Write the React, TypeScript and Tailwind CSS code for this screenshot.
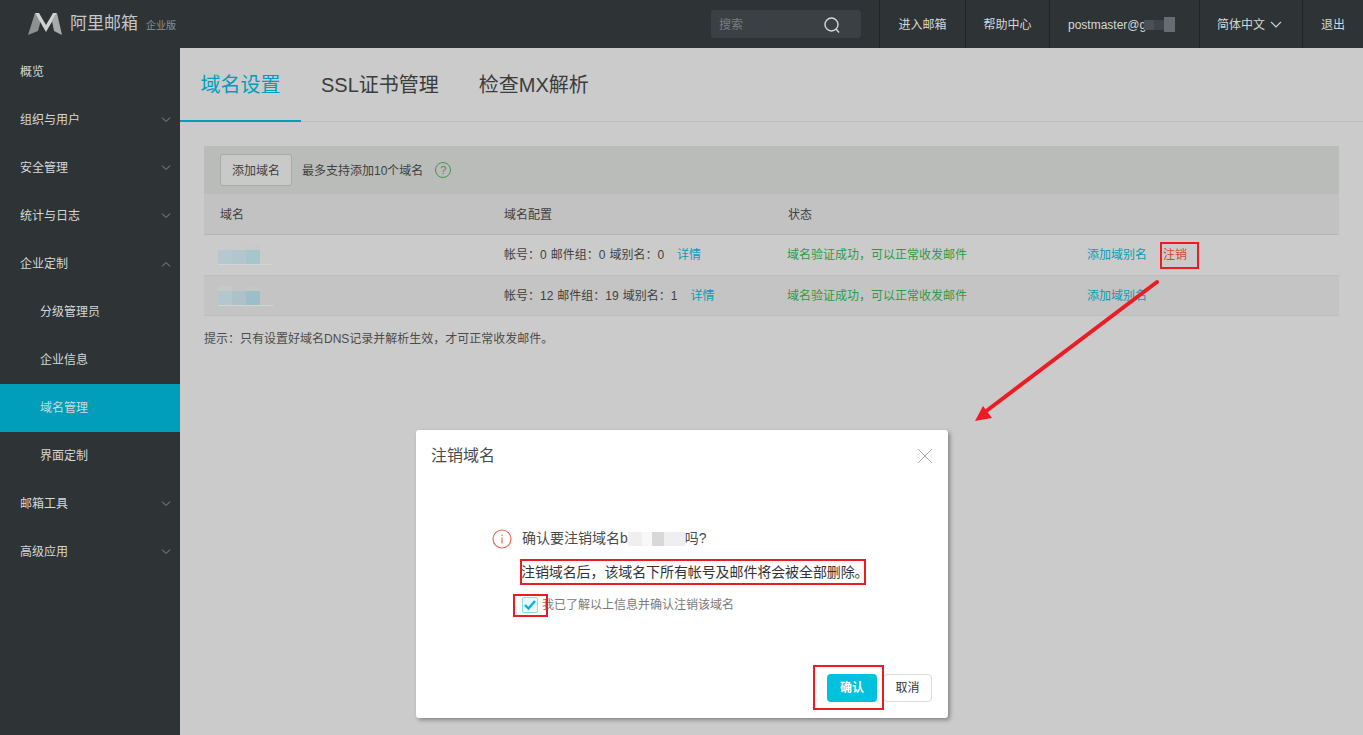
// Domain settings page with the "cancel domain" dialog and red annotations
import { FC } from "react";

const Chevron: FC<{ up?: boolean; className?: string }> = ({ up, className }) => (
  <svg width="10" height="6" viewBox="0 0 10 6" fill="none" className={className}>
    <path d={up ? "M1 5.5L5 1.5L9 5.5" : "M1 0.5L5 4.5L9 0.5"} stroke="currentColor" strokeWidth="1" />
  </svg>
);

const navItems = [
  { label: "概览" },
  { label: "组织与用户", arrow: "down" },
  { label: "安全管理", arrow: "down" },
  { label: "统计与日志", arrow: "down" },
  { label: "企业定制", arrow: "up" },
  { label: "分级管理员", sub: true },
  { label: "企业信息", sub: true },
  { label: "域名管理", sub: true, active: true },
  { label: "界面定制", sub: true },
  { label: "邮箱工具", arrow: "down" },
  { label: "高级应用", arrow: "down" },
];

const Sidebar: FC = () => (
  <aside className="w-[180px] shrink-0 bg-[#2e3336] text-[12px] text-[#d5d8d8]">
    {navItems.map((item) => (
      <div
        key={item.label}
        className={`flex h-12 items-center justify-between pr-[9px] ${item.sub ? "pl-10" : "pl-5"} ${
          item.active ? "bg-[#009ebb] text-[#cfd8da]" : ""
        }`}
      >
        <span>{item.label}</span>
        {item.arrow && <Chevron up={item.arrow === "up"} className="text-[#8b9195]" />}
      </div>
    ))}
  </aside>
);

const Header: FC = () => (
  <header className="flex h-12 shrink-0 items-center bg-[#2e3336] text-[12px] text-[#d5d8d8]">
    <div className="flex items-center pl-7">
      <svg width="35" height="22" viewBox="0 0 35 22">
        <path d="M7 0L0 22L10 18L13 7Z" fill="#8f9190" />
        <path d="M7 0H11L18 12L25 0H29L18 19Z" fill="#d0d2d1" />
        <path d="M29 0L34 22L26 18L24 8Z" fill="#a9abaa" />
      </svg>
      <span className="ml-[7px] text-[17px] text-[#c6c8c8]">阿里邮箱</span>
      <span className="ml-2 mt-0.5 text-[10px] text-[#8d9092]">企业版</span>
    </div>
    <div className="ml-auto mr-[18px] flex h-7 w-[150px] items-center justify-between rounded bg-[#3b4044] pl-2 pr-5 pt-px text-[#787d80]">
      <span>搜索</span>
      <svg width="18" height="18" viewBox="0 0 18 18" fill="none" stroke="#d5d8d8" strokeWidth="1.4">
        <circle cx="8.5" cy="8.5" r="6.5" />
        <path d="M13 13L16 16.5" />
      </svg>
    </div>
    {[
      { label: "进入邮箱", w: "w-[86px]" },
      { label: "帮助中心", w: "w-[84px]" },
    ].map((l) => (
      <div key={l.label} className={`flex h-full ${l.w} items-center justify-center border-l border-[#1f2326] pt-px`}>
        {l.label}
      </div>
    ))}
    <div className="flex h-full w-[150px] items-center border-l border-[#1f2326] pl-[18px] pt-px">
      <span>postmaster@g</span>
      <span className="ml-[-2px] h-[10px] w-[10px] bg-[#4b5054]" />
      <span className="h-[10px] w-[10px] bg-[#3f4448]" />
      <span className="h-[15px] w-[11px] bg-[#676b72]" />
    </div>
    <div className="flex h-full w-[103px] items-center gap-1.5 border-l border-[#1f2326] pl-[17px] pt-px">
      <span>简体中文</span>
      <Chevron className="scale-125 text-[#d5d8d8]" />
    </div>
    <div className="flex h-full w-[61px] items-center justify-center border-l border-[#1f2326] pt-px">退出</div>
  </header>
);

const Tabs: FC = () => (
  <div className="flex h-[74px] shrink-0 border-b border-[#bdbdbd] pt-px text-[20px] text-[#3c3c3c]">
    <div className="-mb-px flex w-[121px] items-center justify-center border-b-2 border-[#009ebb] text-[#009ebb]">
      域名设置
    </div>
    <div className="ml-5 flex items-center">SSL证书管理</div>
    <div className="ml-10 flex items-center">检查MX解析</div>
  </div>
);

const Blur: FC<{ cols: string[]; top: string[] }> = ({ cols, top }) => (
  <div className="ml-3.5 flex flex-col">
    <div className="flex">
      {top.map((c, i) => (
        <span key={i} className={`h-[5px] w-[14px] ${c}`} />
      ))}
    </div>
    <div className="flex">
      {cols.map((c, i) => (
        <span key={i} className={`h-[14px] w-[14px] ${c}`} />
      ))}
    </div>
    <div className="h-px w-[55px] bg-[#d4d6d6]" />
  </div>
);

const rows = [
  {
    cfg: ["帐号：0", "邮件组：0", "域别名：0"],
    h: "h-[41px]",
    bg: "bg-[#cbcbcb]",
    cancel: true,
    blur: ["bg-[#b6c8cf]", "bg-[#b3c6cb]", "bg-[#a5c6cd]"],
    top: ["bg-[#cbcbcb]", "bg-[#cbcbcb]", "bg-[#c6cacb]"],
  },
  {
    cfg: ["帐号：12", "邮件组：19", "域别名：1"],
    h: "h-10",
    bg: "bg-[#c4c4c4]",
    cancel: false,
    blur: ["bg-[#b3c7cd]", "bg-[#acc2c8]", "bg-[#9dbdc8]"],
    top: ["bg-[#c7c9c9]", "bg-[#c1c5c5]", "bg-[#c4c7c7]"],
  },
];

const DomainTable: FC = () => (
  <div className="mx-6 mt-6 text-[12px] text-[#3f3f3f]">
    <div className="flex h-12 items-center bg-[#babcba] pl-4">
      <div className="flex h-8 w-[72px] items-center justify-center rounded-[3px] border border-[#a9a9a9] bg-[#c9c9c9] pt-px">
        添加域名
      </div>
      <span className="ml-2.5 pt-px">最多支持添加10个域名</span>
      <span className="ml-3 flex h-4 w-4 items-center justify-center rounded-full border border-[#3f9a4e] text-[11px] leading-none text-[#4b8f55]">
        ?
      </span>
    </div>
    <div className="grid h-[41px] grid-cols-[300px_284px_300px_1fr] items-center border-b border-[#b6b6b6] bg-[#c2c2c2] pt-px">
      <span className="pl-4">域名</span>
      <span>域名配置</span>
      <span>状态</span>
    </div>
    {rows.map((r, i) => (
      <div
        key={i}
        className={`grid ${r.h} grid-cols-[300px_283px_300px_1fr] items-center border-b border-[#bdbdbd] ${r.bg}`}
      >
        <Blur cols={r.blur} top={r.top} />
        <div className="flex items-center">
          <span className="flex gap-1">
            {r.cfg.map((c) => (
              <span key={c}>{c}</span>
            ))}
          </span>
          <span className="ml-[13px] text-[#0a9bb5]">详情</span>
        </div>
        <span className="text-[#2f9a45]">域名验证成功，可以正常收发邮件</span>
        <div className="flex items-center">
          <span className="text-[#0a9bb5]">添加域别名</span>
          {r.cancel && <span className="ml-4 text-[#d8462c]">注销</span>}
        </div>
      </div>
    ))}
    <p className="mt-[14px] text-[#4c4c4c]">提示：只有设置好域名DNS记录并解析生效，才可正常收发邮件。</p>
  </div>
);

const Dialog: FC = () => (
  <div className="absolute left-[416px] top-[430px] flex h-[288px] w-[532px] flex-col rounded-[3px] bg-white text-[#4a4a4a] shadow-[2px_2px_4px_rgba(0,0,0,0.35)]">
    <div className="flex items-center justify-between pl-[15px] pr-[15px] pt-4">
      <span className="text-[16px] leading-5">注销域名</span>
      <svg width="16" height="16" viewBox="0 0 16 16" stroke="#a8a8a8" strokeWidth="1">
        <path d="M1 1L15 15M15 1L1 15" />
      </svg>
    </div>
    <div className="ml-[76px] mt-[62px] flex items-center">
      <svg width="20" height="20" viewBox="0 0 20 20" fill="none" stroke="#ef6a50" strokeWidth="1.2">
        <circle cx="10" cy="10" r="9" />
        <path d="M10 5.5V7M10 8.5V14.5" />
      </svg>
      <span className="ml-2.5 flex items-center text-[14px]">
        确认要注销域名b
        <span className="h-3.5 w-[14px] bg-[#efefef]" />
        <span className="h-3.5 w-[10px] bg-[#f8f8f8]" />
        <span className="h-3.5 w-[12px] bg-[#d8d8d8]" />
        <span className="h-3.5 w-[21px] bg-[#efefef]" />
        吗?
      </span>
    </div>
    <p className="ml-[105px] mt-[13px] whitespace-nowrap text-[14px] leading-5 tracking-[-0.1px] text-[#333]">
      注销域名后，该域名下所有帐号及邮件将会被全部删除。
    </p>
    <div className="ml-[106px] mt-[14px] flex items-center text-[12px] text-[#7a7a7a]">
      <span className="flex h-4 w-4 items-center justify-center rounded-[2px] border border-[#8fdcea] bg-[#e9f9fc]">
        <svg width="12" height="10" viewBox="0 0 12 10" fill="none" stroke="#00b5d8" strokeWidth="2.4">
          <path d="M1 5L4.5 8.5L11 1" />
        </svg>
      </span>
      <span className="ml-1">我已了解以上信息并确认注销该域名</span>
    </div>
    <div className="mb-4 mr-4 mt-auto flex justify-end gap-1.5 text-[12px]">
      <button className="h-7 w-[50px] rounded-[4px] bg-[#00c1de] font-bold text-white">确认</button>
      <button className="h-7 w-[49px] rounded-[4px] border border-[#dcdcdc] bg-white text-[#333]">取消</button>
    </div>
  </div>
);

// Red markup drawn on top of the screenshot
const Annotations: FC = () => (
  <>
    <div className="absolute left-[1160px] top-[242px] h-[27px] w-[39px] border-2 border-[#ed1c24]" />
    <div className="absolute left-[520px] top-[559px] h-[26px] w-[346px] border-2 border-[#ed1c24]" />
    <div className="absolute left-[513px] top-[594px] h-[23px] w-[35px] border-2 border-[#ed1c24]" />
    <div className="absolute left-[813px] top-[665px] h-[45px] w-[71px] border-2 border-[#ed1c24]" />
    <svg className="absolute left-[970px] top-[275px]" width="195" height="152" viewBox="970 275 195 152">
      <path d="M1157 282L985 412" stroke="#ed1c24" strokeWidth="4" strokeLinecap="round" />
      <path d="M975 421L983 406L992 418Z" fill="#ed1c24" />
    </svg>
  </>
);

export default function App() {
  return (
    <div className="relative flex h-screen flex-col overflow-hidden bg-[#cbcbcb] font-['Liberation_Sans','Noto_Sans_CJK_SC',sans-serif]">
      <Header />
      <div className="flex flex-1 overflow-hidden">
        <Sidebar />
        <main className="flex-1">
          <Tabs />
          <DomainTable />
        </main>
      </div>
      <Dialog />
      <Annotations />
    </div>
  );
}
